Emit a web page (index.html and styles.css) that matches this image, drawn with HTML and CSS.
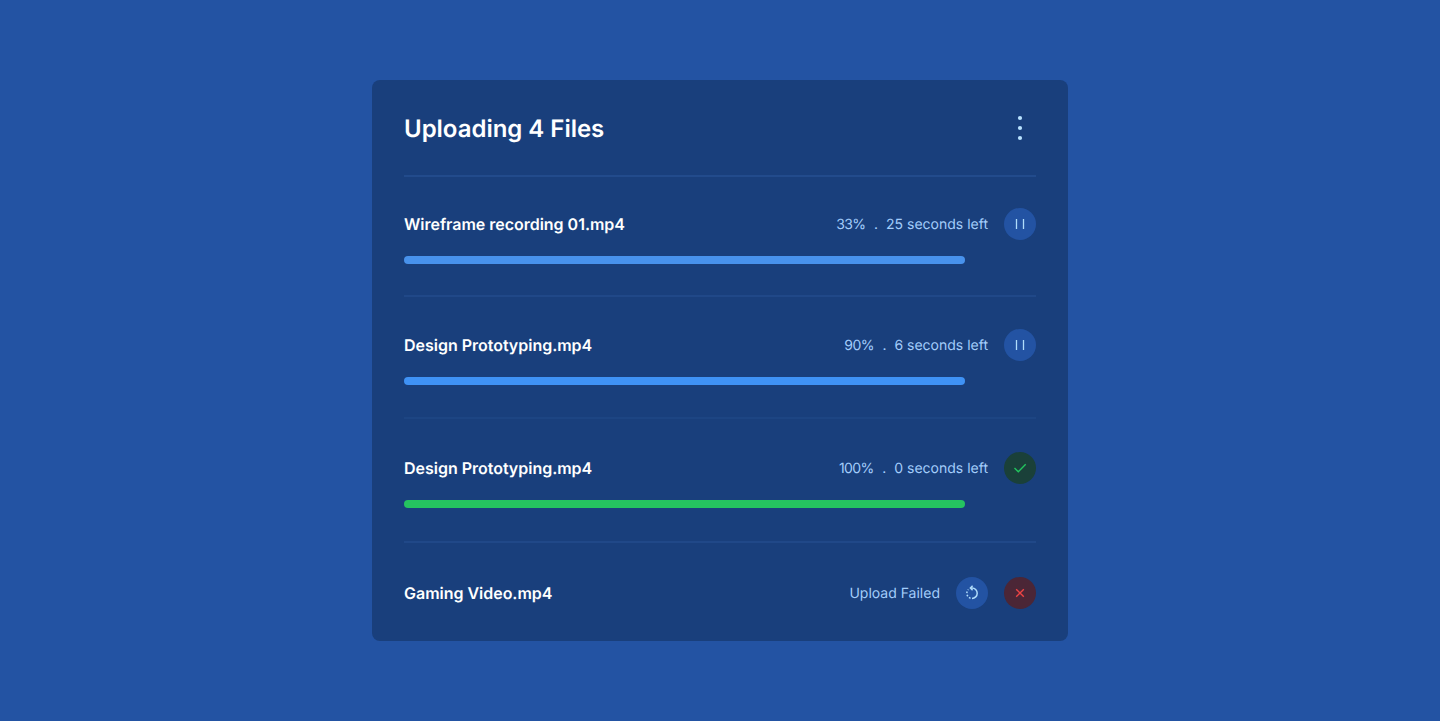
FILE: index.html
```html
<!DOCTYPE html>
<html lang="en">
<head>
<meta charset="utf-8">
<title>Uploading 4 Files</title>
<link rel="stylesheet" href="styles.css">
</head>
<body>
<main class="card">
  <header class="head">
    <h1 class="title">Uploading 4 Files</h1>
    <svg class="more" width="32" height="32" viewBox="0 0 32 32" fill="currentColor"><circle cx="16" cy="6" r="2.1"/><circle cx="16" cy="16" r="2.1"/><circle cx="16" cy="26" r="2.1"/></svg>
  </header>
  <section class="file file-first">
    <div class="row">
      <h2 class="name">Wireframe recording 01.mp4</h2>
      <p class="status"><span class="percent">33%</span><span>.</span><span>25 seconds left</span></p>
      <span class="btn"><svg width="32" height="32" viewBox="0 0 32 32" fill="none" stroke="currentColor"><path d="M12.5 11v10M19.5 11v10" stroke-width="1.3"/></svg></span>
    </div>
    <div class="bar bar-soft"></div>
  </section>
  <section class="file file-second">
    <div class="row">
      <h2 class="name">Design Prototyping.mp4</h2>
      <p class="status"><span class="percent">90%</span><span>.</span><span>6 seconds left</span></p>
      <span class="btn"><svg width="32" height="32" viewBox="0 0 32 32" fill="none" stroke="currentColor"><path d="M12.5 11v10M19.5 11v10" stroke-width="1.3"/></svg></span>
    </div>
    <div class="bar"></div>
  </section>
  <section class="file file-third">
    <div class="row">
      <h2 class="name">Design Prototyping.mp4</h2>
      <p class="status"><span class="percent">100%</span><span>.</span><span>0 seconds left</span></p>
      <span class="btn btn-done"><svg width="32" height="32" viewBox="0 0 32 32" fill="none" stroke="currentColor"><path d="M10.5 16l3.8 3.7 7.4-7.4" stroke-width="1.4"/></svg></span>
    </div>
    <div class="bar bar-done"></div>
  </section>
  <section class="file file-last">
    <div class="row">
      <h2 class="name">Gaming Video.mp4</h2>
      <p class="status">Upload Failed</p>
      <span class="btn"><svg width="32" height="32" viewBox="0 0 32 32" fill="none" stroke="currentColor" stroke-width="1.5"><path d="M15 11h1a5.2 5.2 0 0 1 0 10.4"/><path d="M16 21.4a5.2 5.2 0 0 1-3.6-8.9" stroke-dasharray="1.7 1.6" stroke-dashoffset="-1.5"/><path d="M16.6 8.8l-2.2 2.2 2.2 2.2"/></svg></span>
      <span class="btn btn-fail"><svg width="32" height="32" viewBox="0 0 32 32" fill="none" stroke="currentColor"><path d="M12.2 12.2l7.6 7.6M19.8 12.2l-7.6 7.6" stroke-width="1.4"/></svg></span>
    </div>
  </section>
</main>
</body>
</html>
```
FILE: styles.css
```css
* { box-sizing: border-box; margin: 0; padding: 0; }
body { background: #2353a3; font-family: Inter, sans-serif; padding-top: 80px; text-rendering: geometricPrecision; }
.card { width: 696px; height: 561px; margin: 0 auto; padding: 0 32px; background: #193f7c; border-radius: 8px; color: #fff; }
.head { height: 97px; display: flex; align-items: center; justify-content: space-between; border-bottom: 2px solid #224b8c; }
.title { font-size: 24px; line-height: 32px; font-weight: 600; padding-top: 2px; letter-spacing: -0.02px; }
.more { color: #b9e3ff; }
.file { border-bottom: 2px solid #204888; }
.file-first { height: 120px; padding-top: 31px; }
.file-second { height: 122px; padding-top: 32px; border-color: #1d4583; }
.file-third { height: 124px; padding-top: 33px; }
.file-last { padding-top: 34px; border: 0; }
.row { display: flex; align-items: center; height: 32px; gap: 16px; }
.name { flex: 1; font-size: 16px; line-height: 24px; font-weight: 600; letter-spacing: -0.02px; }
.status { display: flex; gap: 8px; padding-top: 2px; font-size: 14px; line-height: 20px; color: #a3cdfb; white-space: pre; }
.percent { letter-spacing: -0.6px; margin-right: 0.6px; }
.btn { width: 32px; height: 32px; border-radius: 50%; background: #2353a3; color: #b0dcfb; }
.btn svg { display: block; }
.btn-done { background: #1a4039; color: #22c55e; }
.btn-fail { background: #4b2636; color: #ef4444; }
.bar { width: 561px; height: 8px; margin-top: 16px; border-radius: 4px; background: #3f92f5; }
.bar-soft { background: #4892ec; }
.bar-done { background: #25c360; }
```
